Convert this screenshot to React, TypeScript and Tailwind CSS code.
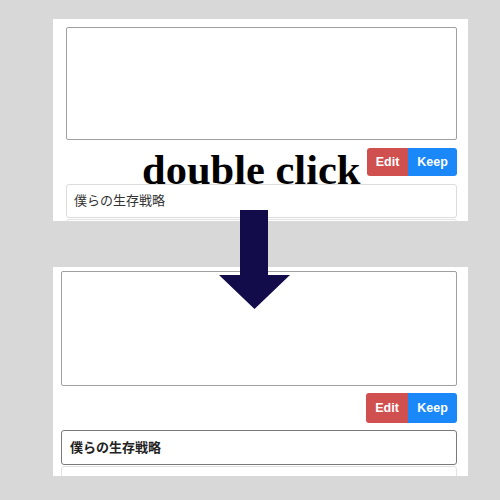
import React from "react";

type PanelProps = {
  active?: boolean;
};

function Panel({ active }: PanelProps) {
  return (
    <div
      className={
        active
          ? "ml-[53px] w-[415px] h-[209px] bg-white overflow-hidden pl-[8px] pr-[11px] pt-[4px]"
          : "ml-[53px] w-[415px] h-[202px] bg-white overflow-hidden pl-[13px] pr-[11px] pt-[8px]"
      }
    >
      <div
        className={
          active
            ? "h-[115px] border border-[#a0a0a0] rounded-[2px]"
            : "h-[113px] border border-[#a0a0a0] rounded-[2px]"
        }
      />
      <div className={active ? "flex justify-end mt-[7px]" : "flex justify-end mt-[8px]"}>
        <button
          className={
            active
              ? "h-[30px] w-[42px] bg-[#d05050] text-white text-[12.5px] font-bold rounded-l-[3px]"
              : "h-[28px] w-[41px] bg-[#d05050] text-white text-[12.5px] font-bold rounded-l-[3px]"
          }
        >
          Edit
        </button>
        <button
          className={
            active
              ? "h-[30px] w-[49px] bg-[#1a88f8] text-white text-[12.5px] font-bold rounded-r-[3px]"
              : "h-[28px] w-[49px] bg-[#1a88f8] text-white text-[12.5px] font-bold rounded-r-[3px]"
          }
        >
          Keep
        </button>
      </div>
      <div
        className={
          active
            ? "mt-[7px] h-[35px] border border-[#7a7a7a] rounded-[3px] flex items-center pl-[8px] text-[13px] font-bold text-[#222]"
            : "mt-[8px] h-[34px] border border-[#dcdcdc] rounded-[3px] flex items-center pl-[7px] text-[13px] text-[#333]"
        }
      >
        僕らの生存戦略
      </div>
      <div className="mt-[1px] h-[40px] border border-[#e2e2e2] rounded-[3px]" />
    </div>
  );
}

export default function App() {
  return (
    <div
      className="relative w-[500px] h-[500px] bg-[#d8d8d8] pt-[19px] overflow-hidden"
      style={{ fontFamily: '"Liberation Sans", "Noto Sans CJK JP", sans-serif' }}
    >
      <Panel />
      <div className="mt-[46px]">
        <Panel active />
      </div>

      <div
        className="absolute left-[142px] top-[146px] text-[42.5px] leading-[48px] font-semibold text-black whitespace-nowrap"
        style={{ fontFamily: '"Liberation Serif", serif' }}
      >
        double click
      </div>

      <svg
        className="absolute left-[219px] top-[210px]"
        width="71"
        height="100"
        viewBox="0 0 71 100"
      >
        <polygon points="21,0 49,0 49,65 71,65 35.5,99 0,65 21,65" fill="#130c4a" />
      </svg>
    </div>
  );
}
